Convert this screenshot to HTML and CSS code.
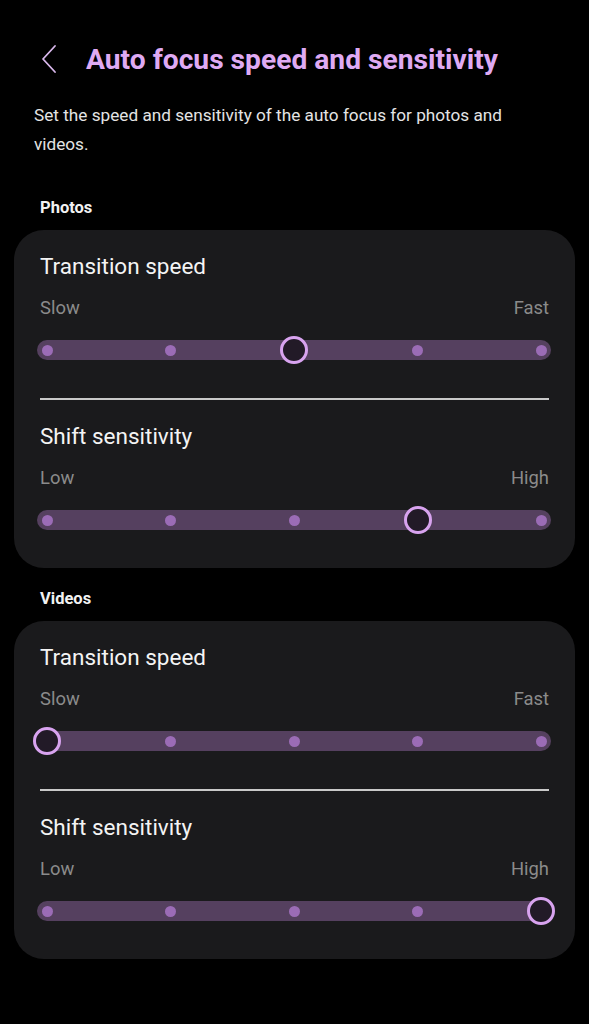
FILE: index.html
```html
<!DOCTYPE html>
<html>

<head>
    <meta charset="utf-8">
    <meta name="viewport" content="width=device-width, initial-scale=1.0">
    <title>Auto focus speed and sensitivity</title>
    <link rel="stylesheet" href="styles.css">
</head>

<body>
    <div class="header">
        <svg class="back" width="18" height="30" viewBox="0 0 18 30">
            <path d="M15 2 L3 15 L15 28" fill="none" stroke="#d9b8ec" stroke-width="1.8" stroke-linecap="round" stroke-linejoin="round" />
        </svg>
        <h1 class="title">Auto focus speed and sensitivity</h1>
    </div>

    <p class="desc">Set the speed and sensitivity of the auto focus for photos and videos.</p>

    <div class="section">Photos</div>
    <div class="card">
        <div class="item">
            <div class="item-title">Transition speed</div>
            <div class="ends"><span>Slow</span><span>Fast</span></div>
            <div class="track">
                <span class="stop"><i class="dot"></i></span>
                <span class="stop"><i class="dot"></i></span>
                <span class="stop"><i class="thumb"></i></span>
                <span class="stop"><i class="dot"></i></span>
                <span class="stop"><i class="dot"></i></span>
            </div>
        </div>
        <div class="divider"></div>
        <div class="item">
            <div class="item-title">Shift sensitivity</div>
            <div class="ends"><span>Low</span><span>High</span></div>
            <div class="track">
                <span class="stop"><i class="dot"></i></span>
                <span class="stop"><i class="dot"></i></span>
                <span class="stop"><i class="dot"></i></span>
                <span class="stop"><i class="thumb"></i></span>
                <span class="stop"><i class="dot"></i></span>
            </div>
        </div>
    </div>

    <div class="section section-gap">Videos</div>
    <div class="card">
        <div class="item">
            <div class="item-title">Transition speed</div>
            <div class="ends"><span>Slow</span><span>Fast</span></div>
            <div class="track">
                <span class="stop"><i class="thumb"></i></span>
                <span class="stop"><i class="dot"></i></span>
                <span class="stop"><i class="dot"></i></span>
                <span class="stop"><i class="dot"></i></span>
                <span class="stop"><i class="dot"></i></span>
            </div>
        </div>
        <div class="divider"></div>
        <div class="item">
            <div class="item-title">Shift sensitivity</div>
            <div class="ends"><span>Low</span><span>High</span></div>
            <div class="track">
                <span class="stop"><i class="dot"></i></span>
                <span class="stop"><i class="dot"></i></span>
                <span class="stop"><i class="dot"></i></span>
                <span class="stop"><i class="dot"></i></span>
                <span class="stop"><i class="thumb"></i></span>
            </div>
        </div>
    </div>
</body>

</html>
```

FILE: styles.css
```css
* {
    padding: 0;
    margin: 0;
    box-sizing: border-box;
}

html,
body {
    background: #000;
}

body {
    width: 589px;
    height: 1024px;
    font-family: Roboto, "Noto Sans", "Liberation Sans", sans-serif;
    color: #fff;
}

/* header */
.header {
    display: flex;
    align-items: center;
    height: 58px;
    margin-top: 30px;
    padding-left: 40px;
}

.back {
    display: block;
    flex: none;
}

.title {
    margin-left: 28px;
    font-size: 28.2px;
    font-weight: 700;
    color: #dfaaf3;
}

.desc {
    margin-top: 13px;
    padding: 0 60px 0 34px;
    font-size: 17.2px;
    line-height: 29px;
    color: #e4e4e4;
}

.section {
    margin-top: 39px;
    padding-left: 40px;
    font-size: 16.5px;
    font-weight: 700;
    line-height: 20px;
    color: #f2f2f2;
}

.section-gap {
    margin-top: 21px;
}

/* card */
.card {
    margin: 12px 14px 0;
    padding: 24px 24px 38px 23px;
    background: #1a1a1c;
    border-radius: 30px;
}

.item-title {
    padding-left: 3px;
    font-size: 22.5px;
    line-height: 24px;
    color: #f4f4f4;
}

.ends {
    display: flex;
    justify-content: space-between;
    margin-top: 19px;
    padding: 0 2px 0 3px;
    font-size: 18.4px;
    line-height: 22px;
    color: #8b8b8b;
}

.divider {
    height: 2px;
    margin: 38px 2px 24px 3px;
    background: #c9c9c9;
}

/* slider */
.track {
    display: flex;
    justify-content: space-between;
    align-items: center;
    height: 20px;
    margin-top: 21px;
    padding: 0 10px;
    background: #55405f;
    border-radius: 10px;
}

.stop {
    display: flex;
    justify-content: center;
    align-items: center;
    width: 0;
    height: 20px;
}

.dot {
    flex: none;
    width: 11px;
    height: 11px;
    border-radius: 50%;
    background: #9b6cb6;
}

.thumb {
    flex: none;
    width: 28px;
    height: 28px;
    border-radius: 50%;
    border: 3px solid #d8a3ef;
    background: #221a27;
}
```
